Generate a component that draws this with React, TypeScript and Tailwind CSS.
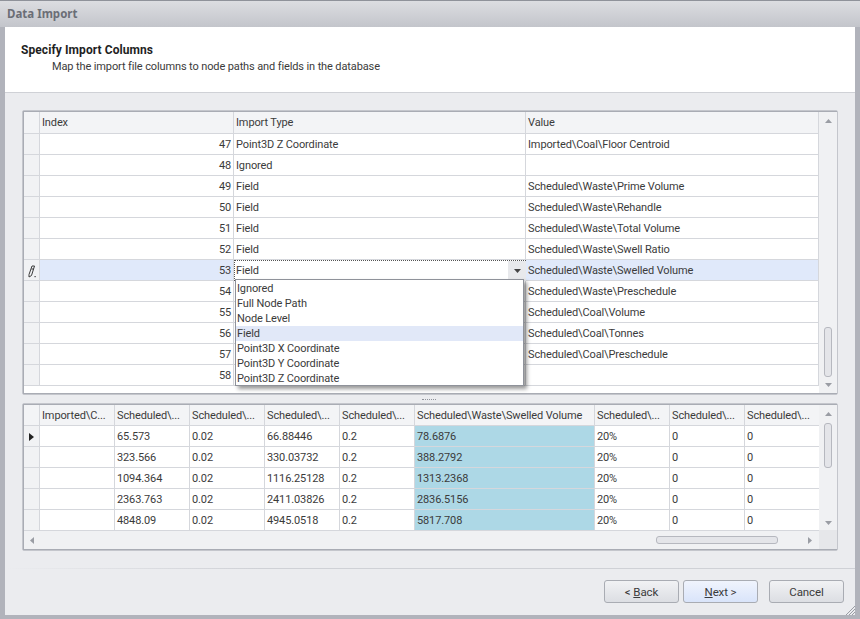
import { ReactNode } from 'react';

const topRows = [
  { index: 47, type: 'Point3D Z Coordinate', value: 'Imported\\Coal\\Floor Centroid' },
  { index: 48, type: 'Ignored', value: '' },
  { index: 49, type: 'Field', value: 'Scheduled\\Waste\\Prime Volume' },
  { index: 50, type: 'Field', value: 'Scheduled\\Waste\\Rehandle' },
  { index: 51, type: 'Field', value: 'Scheduled\\Waste\\Total Volume' },
  { index: 52, type: 'Field', value: 'Scheduled\\Waste\\Swell Ratio' },
  { index: 53, type: 'Field', value: 'Scheduled\\Waste\\Swelled Volume' },
  { index: 54, type: '', value: 'Scheduled\\Waste\\Preschedule' },
  { index: 55, type: '', value: 'Scheduled\\Coal\\Volume' },
  { index: 56, type: '', value: 'Scheduled\\Coal\\Tonnes' },
  { index: 57, type: '', value: 'Scheduled\\Coal\\Preschedule' },
  { index: 58, type: '', value: '' },
];

const previewRows = [
  ['65.573', '0.02', '66.88446', '0.2', '78.6876', '20%', '0', '0'],
  ['323.566', '0.02', '330.03732', '0.2', '388.2792', '20%', '0', '0'],
  ['1094.364', '0.02', '1116.25128', '0.2', '1313.2368', '20%', '0', '0'],
  ['2363.763', '0.02', '2411.03826', '0.2', '2836.5156', '20%', '0', '0'],
  ['4848.09', '0.02', '4945.0518', '0.2', '5817.708', '20%', '0', '0'],
];

const options = [
  'Ignored',
  'Full Node Path',
  'Node Level',
  'Field',
  'Point3D X Coordinate',
  'Point3D Y Coordinate',
  'Point3D Z Coordinate',
];

const Arrow = ({ dir }: { dir: 'up' | 'down' | 'left' | 'right' }) => {
  const points = {
    up: '0,4 3.5,0 7,4',
    down: '0,0 7,0 3.5,4',
    left: '4,0 4,7 0,3.5',
    right: '0,0 4,3.5 0,7',
  }[dir];
  const vertical = dir === 'up' || dir === 'down';
  return (
    <svg width={vertical ? 7 : 4} height={vertical ? 4 : 7} className="fill-[#9a9da4]">
      <polygon points={points} />
    </svg>
  );
};

const Cell = ({ children, className = '' }: { children?: ReactNode; className?: string }) => (
  <div className={`flex items-center overflow-hidden whitespace-nowrap border-r border-b border-[#d5d7dc] px-[2px] pt-[2px] ${className}`}>
    {children}
  </div>
);

const VScroll = ({ spaceTop, thumb, spaceBottom }: { spaceTop: number; thumb: number; spaceBottom: number }) => (
  <div className="flex w-[18px] shrink-0 flex-col items-center bg-[#f0f1f3]">
    <div className="flex h-[18px] items-center justify-center">
      <Arrow dir="up" />
    </div>
    <div style={{ height: spaceTop }} />
    <div
      className="w-[8px] shrink-0 rounded-[3px] border border-[#b6b8bf] bg-[#e4e5e9]"
      style={{ height: thumb }}
    />
    <div style={{ height: spaceBottom }} />
    <div className="flex h-[14px] items-center justify-center">
      <Arrow dir="down" />
    </div>
  </div>
);

const Panel = ({ className, children }: { className: string; children: ReactNode }) => (
  <div className={`ml-[17px] w-[816px] rounded-[2px] border border-[#c4c6cc] ${className}`}>
    <div className="flex h-full border border-[#a9acb4] bg-white">{children}</div>
  </div>
);

const WizardButton = ({ children, active }: { children: ReactNode; active?: boolean }) => (
  <button
    className={`flex h-[23px] w-[75px] items-center justify-center rounded-[3px] border border-[#a9acb3] pt-[2px] text-[11.5px] text-[#3b3b3b] ${
      active ? 'bg-linear-to-b from-[#f0f4fd] to-[#d9e4fa]' : 'bg-linear-to-b from-[#f1f2f4] to-[#dcdee3]'
    }`}
  >
    {children}
  </button>
);

const PencilIcon = () => (
  <svg width="10" height="13" viewBox="0 0 10 13" fill="none" stroke="#3a3a3a" strokeWidth="1">
    <path d="M5 1 L7.5 1 L4.5 10.5 L2 12 L2 9.5 Z" />
    <path d="M4.4 4 L6.8 4" />
    <rect x="7.5" y="11" width="1.2" height="1.2" fill="#3a3a3a" stroke="none" />
  </svg>
);

const RowPointer = () => (
  <svg width="5" height="8">
    <polygon points="0,0 5,4 0,8" fill="#222" />
  </svg>
);

export default function App() {
  return (
    <div className="flex h-[619px] w-[860px] flex-col overflow-hidden border-t border-[#8f929a] bg-[#b1b3bb] font-['Roboto',sans-serif] text-[11px] tracking-[-0.12px] text-[#3b3b3b]">
      <div className="flex h-[26px] shrink-0 items-center bg-linear-to-b from-[#dcdde1] to-[#c3c5cb] pl-[7px] font-['Noto_Sans',sans-serif] text-[11.5px] font-bold tracking-normal text-[#6b6e76]">
        Data Import
      </div>

      <div className="mx-[5px] flex h-[588px] flex-col bg-[#ebecef]">
        <div className="h-[66px] shrink-0 border-b border-[#cfd1d6] bg-white pl-[16px] pt-[15px]">
          <div className="text-[12px] leading-[16px] font-bold tracking-[0.08px] text-[#1f1f1f]">Specify Import Columns</div>
          <div className="mt-px pl-[31px] leading-[16px]">Map the import file columns to node paths and fields in the database</div>
        </div>

        <Panel className="mt-[17px] h-[285px] shrink-0">
          <div className="relative w-[795px] shrink-0">
            <div className="grid h-[22px] grid-cols-[16px_194px_292px_293px] bg-[#f3f4f6]">
              <Cell />
              <Cell>Index</Cell>
              <Cell>Import Type</Cell>
              <Cell>Value</Cell>
            </div>
            {topRows.map((row) => {
              const editing = row.index === 53;
              return (
                <div
                  key={row.index}
                  className={`grid h-[21px] grid-cols-[16px_194px_292px_293px] ${editing ? 'bg-[#e0e9fa]' : ''}`}
                >
                  <Cell className="justify-center bg-[#f1f2f4]">{editing && <PencilIcon />}</Cell>
                  <Cell className="justify-end">{row.index}</Cell>
                  {editing ? (
                    <div className="flex items-center justify-between border-t border-l border-dotted border-[#555] bg-white pl-[1px]">
                      <span>{row.type}</span>
                      <div className="flex h-full w-[18px] items-center justify-center bg-[#e8e9ec]">
                        <svg width="7" height="4">
                          <polygon points="0,0 7,0 3.5,4" fill="#444" />
                        </svg>
                      </div>
                    </div>
                  ) : (
                    <Cell>{row.type}</Cell>
                  )}
                  <Cell>{row.value}</Cell>
                </div>
              );
            })}

            <div className="absolute top-[167px] left-[211px] h-[107px] w-[289px] border border-[#8f929a] bg-white py-px shadow-[3px_3px_4px_rgba(0,0,0,0.4)]">
              {options.map((option) => (
                <div
                  key={option}
                  className={`flex h-[15px] items-center px-px pt-px ${option === 'Field' ? 'bg-[#e1e8f8]' : ''}`}
                >
                  {option}
                </div>
              ))}
            </div>
          </div>
          <VScroll spaceTop={197} thumb={50} spaceBottom={1} />
        </Panel>

        <div className="flex h-[8px] shrink-0 items-center justify-center pr-[2px]">
          <div className="h-[1px] w-[14px] border-t border-dotted border-[#8f929a]" />
        </div>

        <Panel className="h-[148px] shrink-0">
          <div className="flex w-[795px] shrink-0 flex-col">
            <div className="grid h-[21px] shrink-0 grid-cols-[16px_75px_75px_75px_75px_75px_180px_75px_75px_74px] bg-[#f3f4f6]">
              <Cell />
              <Cell>Imported\C...</Cell>
              <Cell>Scheduled\...</Cell>
              <Cell>Scheduled\...</Cell>
              <Cell>Scheduled\...</Cell>
              <Cell>Scheduled\...</Cell>
              <Cell>Scheduled\Waste\Swelled Volume</Cell>
              <Cell>Scheduled\...</Cell>
              <Cell>Scheduled\...</Cell>
              <Cell className="border-r-0">Scheduled\...</Cell>
            </div>
            {previewRows.map((row, i) => (
              <div key={i} className="grid h-[21px] shrink-0 grid-cols-[16px_75px_75px_75px_75px_75px_180px_75px_75px_74px]">
                <Cell className="justify-center bg-[#f1f2f4]">{i === 0 && <RowPointer />}</Cell>
                <Cell />
                {row.map((value, j) => (
                  <Cell
                    key={j}
                    className={`${j === 4 ? 'bg-[#add8e6]' : ''} ${j === 7 ? 'border-r-0' : ''}`}
                  >
                    {value}
                  </Cell>
                ))}
              </div>
            ))}
            <div className="flex h-[18px] shrink-0 items-center bg-[#f0f1f3] pl-[6px]">
              <Arrow dir="left" />
              <div className="ml-[622px] h-[8px] w-[122px] rounded-[3px] border border-[#b6b8bf] bg-[#e4e5e9]" />
              <div className="ml-[30px]">
                <Arrow dir="right" />
              </div>
            </div>
          </div>
          <div className="flex w-[18px] shrink-0 flex-col">
            <VScroll spaceTop={0} thumb={45} spaceBottom={48} />
            <div className="flex-1 bg-[#e6e7ea]" />
          </div>
        </Panel>

        <div className="mt-[17px] h-px shrink-0 bg-linear-to-r from-[#ebecef] to-[#cfd1d6] to-30%" />

        <div className="relative flex flex-1 items-start justify-end pt-[11px] pr-[11px]">
          <WizardButton>
            &lt;&nbsp;<span className="underline">B</span>ack
          </WizardButton>
          <div className="ml-[4px]">
            <WizardButton active>
              <span className="underline">N</span>ext &gt;
            </WizardButton>
          </div>
          <div className="ml-[11px]">
            <WizardButton>Cancel</WizardButton>
          </div>
          <svg width="11" height="9" viewBox="0 0 11 9" className="absolute right-0 bottom-0 stroke-[#9a9da4]">
            <path d="M2 9 L11 0 M5 9 L11 3 M8 9 L11 6" />
          </svg>
        </div>
      </div>
    </div>
  );
}
